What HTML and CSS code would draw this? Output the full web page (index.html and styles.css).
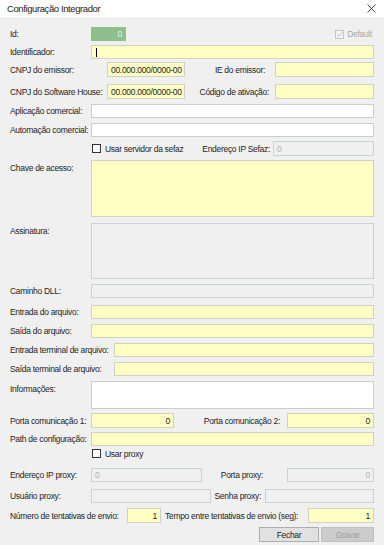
FILE: index.html
```html
<!DOCTYPE html>
<html lang="pt-BR">
<head>
    <meta charset="UTF-8">
    <meta name="viewport" content="width=device-width, initial-scale=1.0">
    <title>Configuração Integrador</title>
    <link rel="stylesheet" href="styles.css">
</head>
<body>
    <div class="window">
        <div class="titlebar">
            <span class="title">Configuração Integrador</span>
            <svg class="close" width="9" height="9" viewBox="0 0 9 9">
                <path d="M0.5 0.5 L8.5 8.5 M8.5 0.5 L0.5 8.5" stroke="#333" stroke-width="0.9" fill="none"/>
            </svg>
        </div>

        <div class="form">
            <div class="row first">
                <span class="lbl w81">Id:</span>
                <div class="field green num w35">0</div>
                <div class="spacer"></div>
                <span class="check disabled">
                    <span class="box">
                        <svg width="9" height="9" viewBox="0 0 9 9"><path d="M1.8 4.6 L3.7 6.4 L7.3 2.4" stroke="#b4b4b4" stroke-width="0.9" fill="none"/></svg>
                    </span>Default
                </span>
            </div>

            <div class="row mt4">
                <span class="lbl w81">Identificador:</span>
                <div class="field yellow grow"><span class="caret"></span></div>
            </div>

            <div class="row mt3 h15">
                <span class="lbl w97">CNPJ do emissor:</span>
                <div class="field yellow w78">00.000.000/0000-00</div>
                <span class="lbl right grow pr10">IE do emissor:</span>
                <div class="field yellow w99"></div>
            </div>

            <div class="row mt7 h15">
                <span class="lbl w97">CNPJ do Software House:</span>
                <div class="field yellow w78">00.000.000/0000-00</div>
                <span class="lbl right grow pr6">Código de ativação:</span>
                <div class="field yellow w99"></div>
            </div>

            <div class="row">
                <span class="lbl w81">Aplicação comercial:</span>
                <div class="field white grow"></div>
            </div>

            <div class="row">
                <span class="lbl w81">Automação comercial:</span>
                <div class="field white grow"></div>
            </div>

            <div class="row mt4 h15">
                <span class="lbl w81"></span>
                <span class="check"><span class="box"></span>Usar servidor da sefaz</span>
                <span class="lbl right grow pr3">Endereço IP Sefaz:</span>
                <div class="field off w101">0</div>
            </div>

            <div class="row mt4 tall57">
                <span class="lbl w81 top">Chave de acesso:</span>
                <div class="field yellow grow"></div>
            </div>

            <div class="row mt6 tall56">
                <span class="lbl w81 top">Assinatura:</span>
                <div class="field off grow"></div>
            </div>

            <div class="row">
                <span class="lbl w81">Caminho DLL:</span>
                <div class="field off grow"></div>
            </div>

            <div class="row mt7">
                <span class="lbl w81">Entrada do arquivo:</span>
                <div class="field yellow grow"></div>
            </div>

            <div class="row">
                <span class="lbl w81">Saída do arquivo:</span>
                <div class="field yellow grow"></div>
            </div>

            <div class="row">
                <span class="lbl w104">Entrada terminal de arquivo:</span>
                <div class="field yellow grow"></div>
            </div>

            <div class="row">
                <span class="lbl w104">Saída terminal de arquivo:</span>
                <div class="field yellow grow"></div>
            </div>

            <div class="row tall28">
                <span class="lbl w81 top">Informações:</span>
                <div class="field white grow"></div>
            </div>

            <div class="row mt4 h15">
                <span class="lbl w81">Porta comunicação 1:</span>
                <div class="field yellow num w83">0</div>
                <span class="lbl right grow pr7">Porta comunicação 2:</span>
                <div class="field yellow num w87">0</div>
            </div>

            <div class="row mt4">
                <span class="lbl w81">Path de configuração:</span>
                <div class="field yellow grow"></div>
            </div>

            <div class="row mt1 h13">
                <span class="lbl w81"></span>
                <span class="check"><span class="box"></span>Usar proxy</span>
            </div>

            <div class="row mt8">
                <span class="lbl w81">Endereço IP proxy:</span>
                <div class="field off w111">0</div>
                <span class="lbl right grow pr24">Porta proxy:</span>
                <div class="field off num w87">0</div>
            </div>

            <div class="row mt7">
                <span class="lbl w81">Usuário proxy:</span>
                <div class="field off w120"></div>
                <span class="lbl right grow pr4">Senha proxy:</span>
                <div class="field off w109"></div>
            </div>

            <div class="row h15">
                <span class="lbl w117">Número de tentativas de envio:</span>
                <div class="field yellow num w34">1</div>
                <span class="lbl grow pl4">Tempo entre tentativas de envio (seg):</span>
                <div class="field yellow num w66">1</div>
            </div>

            <div class="row mt4 h15 buttons">
                <button class="btn w60">Fechar</button>
                <button class="btn w53" disabled>Gravar</button>
            </div>
        </div>
    </div>
</body>
</html>
```

FILE: styles.css
```css
body {
    margin: 0;
    background: #f0f0f0;
    font-family: "Liberation Sans", Arial, sans-serif;
    font-size: 8.5px;
    letter-spacing: -0.3px;
    color: #1e1e1e;
}
.window {
    width: 384px;
    height: 545px;
    overflow: hidden;
    background: #f0f0f0;
}
.titlebar {
    height: 17px;
    background: #fff;
    display: flex;
    align-items: center;
    justify-content: space-between;
    padding: 0 8px 0 7px;
}
.title {
    font-size: 9.5px;
    letter-spacing: -0.4px;
    color: #222;
}

.form {
    padding: 10px 10px 0 10px;
}
.row {
    display: flex;
    align-items: center;
    height: 14px;
    margin-top: 5px;
}
.row.first { margin-top: 0; }
.mt1 { margin-top: 1px; }
.mt3 { margin-top: 3px; }
.mt4 { margin-top: 4px; }
.mt6 { margin-top: 6px; }
.mt7 { margin-top: 7px; }
.mt8 { margin-top: 8px; }
.h13 { height: 13px; }
.h15 { height: 15px; }
.tall28 { height: 28px; align-items: stretch; }
.tall56 { height: 56px; align-items: stretch; }
.tall57 { height: 57px; align-items: stretch; }

.lbl {
    flex: none;
    white-space: nowrap;
}
.lbl.top { padding-top: 3px; }
.lbl.right { text-align: right; }
.grow { flex: 1; }
.spacer { flex: 1; }
.pl4 { padding-left: 4px; }
.pr3 { padding-right: 3px; }
.pr4 { padding-right: 4px; }
.pr6 { padding-right: 6px; }
.pr7 { padding-right: 7px; }
.pr10 { padding-right: 10px; }
.pr24 { padding-right: 24px; }

.w34 { width: 34px; }
.w35 { width: 35px; }
.w53 { width: 53px; }
.w60 { width: 60px; }
.w66 { width: 66px; }
.w78 { width: 78px; }
.w81 { width: 81px; }
.w83 { width: 83px; }
.w87 { width: 87px; }
.w97 { width: 97px; }
.w99 { width: 99px; }
.w101 { width: 101px; }
.w104 { width: 104px; }
.w109 { width: 109px; }
.w111 { width: 111px; }
.w117 { width: 117px; }
.w120 { width: 120px; }

.field {
    box-sizing: border-box;
    height: 100%;
    flex: none;
    border: 1px solid #cbcdd2;
    padding: 0 3px;
    display: flex;
    align-items: center;
    white-space: nowrap;
    color: #1e1e1e;
}
.field.grow { flex: 1; }
.field.num { justify-content: flex-end; }
.yellow { background: #ffffc4; border-color: #d2d2c4; }
.white { background: #fff; }
.off { background: #f0f0f0; color: #b0b0b0; border-color: #cdd1d8; }
.green {
    background: #8fbf8a;
    border-color: #8fbf8a;
    color: #e4f2e2;
}
.caret {
    display: block;
    width: 1px;
    height: 9px;
    background: #000;
    margin-left: 1px;
}

.check {
    display: flex;
    align-items: center;
    white-space: nowrap;
    margin-left: 1px;
}
.check .box {
    box-sizing: border-box;
    width: 9px;
    height: 9px;
    border: 1px solid #333;
    background: #fff;
    margin-right: 4px;
    display: flex;
}
.check .box svg { margin: -1px; }
.check.disabled { color: #a8a8a8; margin-right: 2px; }
.check.disabled .box { border-color: #c4c4c4; background: #f6f6f6; margin-right: 3px; }

.buttons { justify-content: flex-end; gap: 2px; }
.btn {
    box-sizing: border-box;
    height: 100%;
    font-family: inherit;
    font-size: 8.5px;
    letter-spacing: -0.3px;
    padding: 0;
    color: #1e1e1e;
    background: #e1e1e1;
    border: 1px solid #adadad;
}
.btn:disabled {
    color: #a0a0a0;
    background: #cccccc;
    border-color: #bfbfbf;
}
```
